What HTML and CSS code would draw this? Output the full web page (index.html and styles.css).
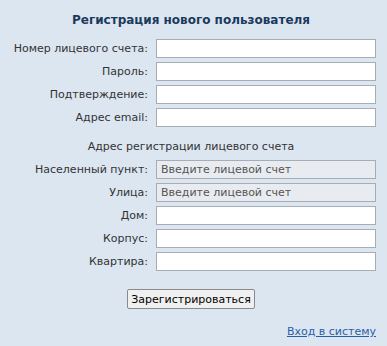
FILE: index.html
```html
<!DOCTYPE html>
<html lang="ru">
<head>
    <meta charset="UTF-8">
    <title>Регистрация нового пользователя</title>
    <link rel="stylesheet" href="styles.css">
</head>
<body>
<div class="reg-box">
    <h2 class="reg-title">Регистрация нового пользователя</h2>
    <form class="reg-form" onsubmit="return false">
        <label for="account">Номер лицевого счета:</label>
        <input type="text" id="account">
        <label for="pass">Пароль:</label>
        <input type="password" id="pass">
        <label for="pass2">Подтверждение:</label>
        <input type="password" id="pass2">
        <label for="email">Адрес email:</label>
        <input type="text" id="email">

        <div class="section">Адрес регистрации лицевого счета</div>

        <label for="city">Населенный пункт:</label>
        <input type="text" id="city" value="Введите лицевой счет" readonly>
        <label for="street">Улица:</label>
        <input type="text" id="street" value="Введите лицевой счет" readonly>
        <label for="house">Дом:</label>
        <input type="text" id="house">
        <label for="block">Корпус:</label>
        <input type="text" id="block">
        <label for="flat">Квартира:</label>
        <input type="text" id="flat">

        <div class="actions">
            <button type="submit">Зарегистрироваться</button>
        </div>
    </form>
    <div class="login-link"><a href="#">Вход в систему</a></div>
</div>
</body>
</html>
```
FILE: styles.css
```css
* { box-sizing: border-box; }
body {
    margin: 0;
    background: #dce6f1;
    font-family: "DejaVu Sans", Verdana, sans-serif;
    font-size: 11px;
    color: #333;
}
.reg-box {
    width: 370px;
    margin-left: 6px;
    padding-top: 13px;
}
.reg-title {
    margin: 0 0 12px;
    text-align: center;
    font-size: 12px;
    font-weight: bold;
    color: #1b3a5c;
}
.reg-form {
    display: grid;
    grid-template-columns: 142px 220px;
    column-gap: 8px;
    row-gap: 4px;
    align-items: center;
}
.reg-form label {
    text-align: right;
    color: #333;
}
.reg-form input {
    height: 19px;
    border: 1px solid #a7adb3;
    background: #fff;
    padding: 0 4px;
    font-family: inherit;
    font-size: 11px;
    color: #555;
}
.reg-form input[readonly] {
    background: #e8ecf0;
}
.section {
    grid-column: 1 / 3;
    text-align: center;
    padding: 9px 0 3px;
}
.actions {
    grid-column: 1 / 3;
    text-align: center;
    padding-top: 14px;
}
.actions button {
    font-family: inherit;
    font-size: 11px;
    color: #000;
    background: #f0f0f0;
    border: 1px solid #8a8a8a;
    border-radius: 2px;
    height: 20px;
    padding: 0 3px;
}
.login-link {
    text-align: right;
    margin-top: 16px;
}
.login-link a {
    color: #2a5fa5;
}
```
